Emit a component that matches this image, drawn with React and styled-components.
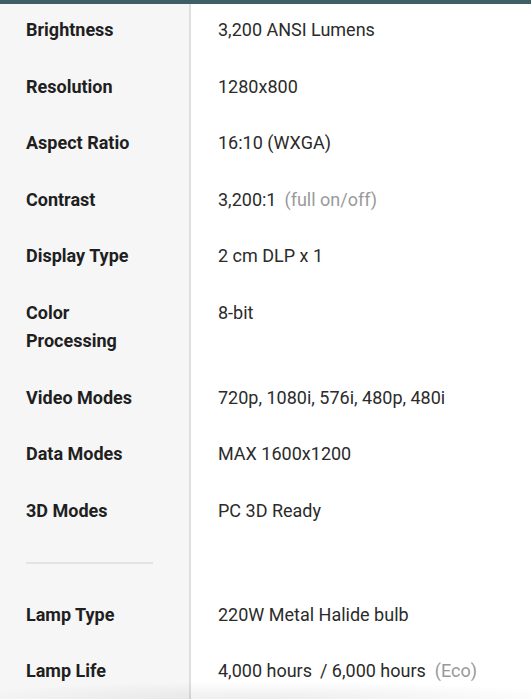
import React from "react";
import styled, { createGlobalStyle } from "styled-components";

const Global = createGlobalStyle`
  html, body { margin: 0; padding: 0; background: #ffffff; }
  body { font-family: Roboto, "Liberation Sans", Arial, sans-serif; -webkit-font-smoothing: antialiased; }
  * { box-sizing: border-box; }
`;

const Page = styled.div`
  position: relative;
  width: 531px;
  height: 699px;
  overflow: hidden;
  padding-top: 2px;
  background: linear-gradient(to right, #f6f6f6 0, #f6f6f6 189px, #dedede 189px, #dedede 191px, #ffffff 191px);
`;

const TopBar = styled.div`
  position: absolute;
  top: 0;
  left: 0;
  right: 0;
  height: 4px;
  background: #3e5f65;
  z-index: 2;
`;

const BottomShade = styled.div`
  position: absolute;
  left: 0;
  right: 0;
  bottom: 0;
  height: 18px;
  background: radial-gradient(ellipse 60% 100% at 50% 100%, rgba(0,0,0,0.07), rgba(0,0,0,0) 100%);
  pointer-events: none;
  z-index: 2;
`;

const Table = styled.div`
  display: grid;
  grid-template-columns: 190px 1fr;
  align-content: start;
`;

const Label = styled.div`
  padding: 14px 20px 14px 26px;
  font-size: 18px;
  font-weight: 700;
  line-height: 28.5px;
  color: #1f1f1f;
`;

const Value = styled.div`
  padding: 14px 12px 14px 28px;
  font-size: 18px;
  font-weight: 400;
  line-height: 28.5px;
  color: #2b2b2b;
  white-space: nowrap;
`;

const Note = styled.span`
  color: #9a9a9a;
  margin-left: ${(p) => p.$gap || 8}px;
`;

const Gap = styled.span`
  margin-left: ${(p) => p.$gap || 6}px;
`;

const SepCell = styled.div`
  height: 47.5px;
  display: flex;
  align-items: center;
  padding-left: 26px;
`;

const SepLine = styled.div`
  width: 127px;
  height: 2px;
  background: #e3e3e3;
`;

const Empty = styled.div``;

const rows = [
  { label: "Brightness", value: "3,200 ANSI Lumens" },
  { label: "Resolution", value: "1280x800" },
  { label: "Aspect Ratio", value: "16:10 (WXGA)" },
  { label: "Contrast", value: "3,200:1", note: "(full on/off)" },
  { label: "Display Type", value: "2 cm DLP x 1" },
  { label: <>Color<br />Processing</>, value: "8-bit" },
  { label: "Video Modes", value: "720p, 1080i, 576i, 480p, 480i" },
  { label: "Data Modes", value: "MAX 1600x1200" },
  { label: "3D Modes", value: "PC 3D Ready" },
];

export default function App() {
  return (
    <>
      <Global />
      <Page>
        <TopBar />
        <Table>
          {rows.map((r, i) => (
            <React.Fragment key={i}>
              <Label>{r.label}</Label>
              <Value>
                {r.value}
                {r.note && <Note>{r.note}</Note>}
              </Value>
            </React.Fragment>
          ))}
          <SepCell>
            <SepLine />
          </SepCell>
          <Empty />
          <Label>Lamp Type</Label>
          <Value>220W Metal Halide bulb</Value>
          <Label>Lamp Life</Label>
          <Value>
            4,000 hours<Gap $gap={8}>/ 6,000 hours</Gap>
            <Note $gap={9}>(Eco)</Note>
          </Value>
        </Table>
        <BottomShade />
      </Page>
    </>
  );
}
